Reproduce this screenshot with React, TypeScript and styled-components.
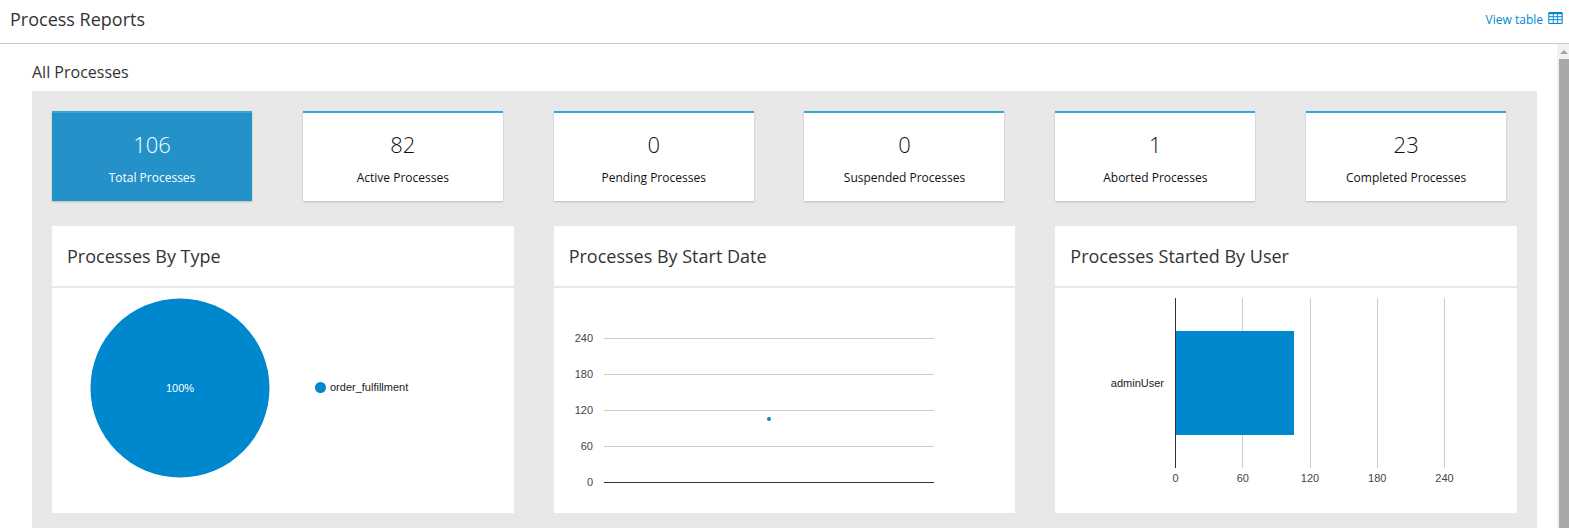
import React from "react";
import styled, { createGlobalStyle } from "styled-components";

const GlobalStyle = createGlobalStyle`
  * { box-sizing: border-box; }
  html, body { margin: 0; height: 100%; overflow: hidden; }
  body { background: #fff; color: #333; font-family: "Open Sans", sans-serif; font-size: 12px; }
`;

const Page = styled.div`
  display: flex;
  flex-direction: column;
  height: 528px;
  width: 1569px;
  overflow: hidden;
`;

const Header = styled.header`
  flex: none;
  height: 44px;
  display: flex;
  justify-content: space-between;
  padding: 0 6px 0 10px;
  border-bottom: 1px solid #ccc;
`;

const PageTitle = styled.h1`
  margin: 0;
  font-size: 18px;
  font-weight: 400;
  line-height: 38px;
`;

const ViewLink = styled.a`
  display: flex;
  gap: 5px;
  color: #0088ce;
  font-size: 12px;
  line-height: 40px;

  svg { margin-top: 12px; }
`;

const Body = styled.div`
  flex: 1;
  min-height: 0;
  display: flex;
`;

const Content = styled.main`
  flex: 1;
  min-width: 0;
  padding: 0 20px 0 32px;
`;

const SectionTitle = styled.h2`
  margin: 0;
  height: 47px;
  padding-top: 17px;
  font-size: 16px;
  font-weight: 400;
  line-height: 22px;
`;

const Dashboard = styled.section`
  background: #e8e8e8;
  height: 437px;
  padding: 20px 0 0 20px;
`;

const Grid = styled.div<{ $columns: number }>`
  display: grid;
  width: 1505px;
  grid-template-columns: repeat(${(p) => p.$columns}, 1fr);
`;

const StatCard = styled.div<{ $active?: boolean }>`
  width: 200px;
  height: 90px;
  margin-bottom: 25px;
  padding-top: 16px;
  text-align: center;
  border-top: 2px solid #39a5dc;
  background: ${(p) => (p.$active ? "#2491c9" : "#fff")};
  color: ${(p) => (p.$active ? "#fff" : "#111")};
  box-shadow: 0 1px 2px rgba(3, 3, 3, 0.2);
`;

const StatValue = styled.div`
  font-size: 22px;
  font-weight: 300;
  line-height: 30px;
`;

const StatLabel = styled.div`
  margin-top: 10px;
  font-size: 12px;
  line-height: 18px;
`;

const ChartCard = styled.article`
  height: 287px;
  margin-right: 40px;
  background: #fff;
`;

const ChartTitle = styled.h3`
  margin: 0;
  height: 62px;
  padding-left: 15px;
  border-bottom: 2px solid #e8e8e8;
  font-size: 18px;
  font-weight: 400;
  line-height: 60px;
`;

const Chart = styled.svg`
  display: block;
  font-family: "Liberation Sans", Arial, sans-serif;
  font-size: 11px;
`;

const Scrollbar = styled.div`
  width: 12px;
  background: #f1f1f1;
  display: flex;
  flex-direction: column;
`;

const ScrollThumb = styled.div`
  flex: 1;
  margin-left: 2px;
  background: #a8a8a8;
`;

const stats = [
  { value: 106, label: "Total Processes" },
  { value: 82, label: "Active Processes" },
  { value: 0, label: "Pending Processes" },
  { value: 0, label: "Suspended Processes" },
  { value: 1, label: "Aborted Processes" },
  { value: 23, label: "Completed Processes" },
];

const ticks = [0, 60, 120, 180, 240];
const barTickX = [120, 187, 255, 322, 389];

const TableIcon = () => (
  <svg width="15" height="12" viewBox="0 0 15 12">
    <rect x="0.3" width="14.4" height="12" rx="1.2" fill="#0088ce" />
    <g fill="#fff">
      {[2.2, 5.2, 8.2].map((y) =>
        [1.3, 5.7, 10.1].map((x) => (
          <rect key={`${x}-${y}`} x={x} y={y} width="3.5" height={y > 8 ? 2.7 : 2} />
        ))
      )}
    </g>
  </svg>
);

const TypeChart = () => (
  <Chart width="461" height="225">
    <circle cx="128" cy="100" r="89.5" fill="#0088ce" />
    <text x="128" y="104" textAnchor="middle" fill="#fff">100%</text>
    <circle cx="268.5" cy="99.5" r="5.5" fill="#0088ce" />
    <text x="278" y="103" fill="#222">order_fulfillment</text>
  </Chart>
);

const StartDateChart = () => (
  <Chart width="461" height="225">
    {ticks.map((t, i) => (
      <g key={t}>
        <rect x="50" y={194 - i * 36} width="330" height="1" fill={t ? "#ccc" : "#333"} />
        <text x="39" y={198 - i * 36} textAnchor="end" fill="#444">{t}</text>
      </g>
    ))}
    <circle cx="215" cy="131" r="2" fill="#0088ce" />
  </Chart>
);

const UserChart = () => (
  <Chart width="461" height="225">
    {ticks.map((t, i) => (
      <g key={t}>
        <rect x={barTickX[i]} y="10" width="1" height="170" fill={t ? "#ccc" : "#333"} />
        <text x={120.5 + i * 67.25} y="194" textAnchor="middle" fill="#444">{t}</text>
      </g>
    ))}
    <rect x="121" y="43" width="118" height="104" fill="#0088ce" />
    <text x="109" y="99" textAnchor="end" fill="#222">adminUser</text>
  </Chart>
);

const charts = [
  { title: "Processes By Type", Graph: TypeChart },
  { title: "Processes By Start Date", Graph: StartDateChart },
  { title: "Processes Started By User", Graph: UserChart },
];

export default function App() {
  return (
    <Page>
      <GlobalStyle />
      <Header>
        <PageTitle>Process Reports</PageTitle>
        <ViewLink>
          View table
          <TableIcon />
        </ViewLink>
      </Header>
      <Body>
        <Content>
          <SectionTitle>All Processes</SectionTitle>
          <Dashboard>
            <Grid $columns={6}>
              {stats.map((s, i) => (
                <StatCard key={s.label} $active={i === 0}>
                  <StatValue>{s.value}</StatValue>
                  <StatLabel>{s.label}</StatLabel>
                </StatCard>
              ))}
            </Grid>
            <Grid $columns={3}>
              {charts.map(({ title, Graph }) => (
                <ChartCard key={title}>
                  <ChartTitle>{title}</ChartTitle>
                  <Graph />
                </ChartCard>
              ))}
            </Grid>
          </Dashboard>
        </Content>
        <Scrollbar>
          <svg width="12" height="15">
            <path d="M3 10 L7 6 L11 10 Z" fill="#a3a3a3" />
          </svg>
          <ScrollThumb />
        </Scrollbar>
      </Body>
    </Page>
  );
}
